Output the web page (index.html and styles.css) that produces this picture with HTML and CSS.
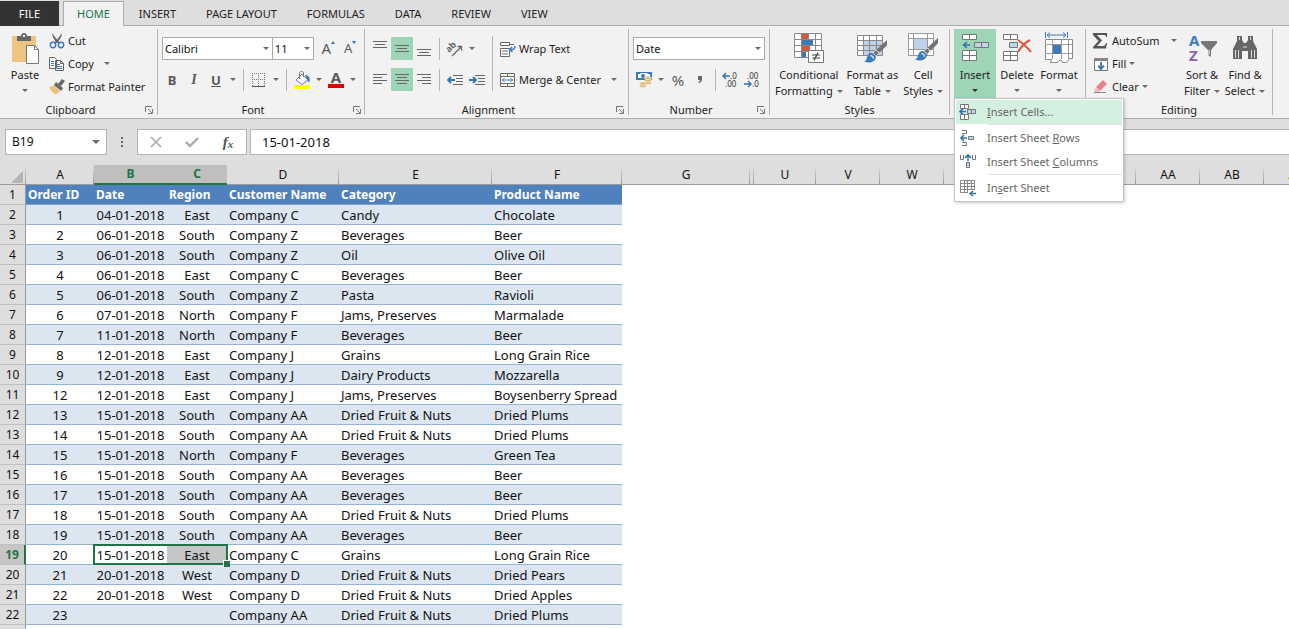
FILE: index.html
```
<!DOCTYPE html>
<html lang="en">
<head>
<meta charset="utf-8">
<title>Orders - Spreadsheet</title>
<link rel="stylesheet" href="styles.css">
</head>
<body>
<svg class="defs" aria-hidden="true">
  <symbol id="brush" viewBox="0 0 22 22"><path d="M22 0v5l-7 7-3-3z" fill="#737373"/><path d="M11.500 9.500l3 3-3 3-3-3z" fill="#737373" stroke="#f2f2f2" stroke-width=".6"/><path d="M8 12.500l3.500 3.500C11 21 5 23 0 20.500c3-1 2-3 3.500-5.500s3-2.500 4.500-2.500z" fill="#3c7ab8"/><path d="M6 15c2 0 3 1 3 3" fill="none" stroke="#dce8f4" stroke-width="1.200"/></symbol>
  <symbol id="launch" viewBox="0 0 9 9"><path d="M.5 6V.5H7M3 3l4 4M7.500 3v4.500H3" fill="none" stroke="#777"/></symbol>
</svg>
<nav class="tabs" aria-label="Ribbon tabs">
  <button class="tab tab-file">FILE</button>
  <button class="tab tab-active">HOME</button>
  <button class="tab">INSERT</button>
  <button class="tab">PAGE LAYOUT</button>
  <button class="tab">FORMULAS</button>
  <button class="tab">DATA</button>
  <button class="tab">REVIEW</button>
  <button class="tab">VIEW</button>
</nav>

<div class="ribbon">
  <section class="group g-clipboard">
    <div class="body">
      <button class="big">
        <svg width="30" height="32" viewBox="0 0 30 32"><path d="M2 4h24v26H2z" fill="#ecc582"/><path d="M7 4h4c0-4 6-4 6 0h4v5H7z" fill="#666"/><path d="M13 3h2v2h-2z" fill="#f2f2f2"/><path d="M16.500 13.500h8l4 4v14h-12z" fill="#fff" stroke="#777"/><path d="M24.500 13.500v4h4" fill="none" stroke="#777"/></svg>
        <span>Paste</span><i class="caret"></i>
      </button>
      <div class="stack">
        <button class="line"><svg width="16" height="16" viewBox="0 0 16 16"><path d="M3 0l6 8 2 2-1 1-3-2C5 6 3 3 3 0zM13 0c0 3-2 6-4 9l-3 2-1-1 2-2z" fill="#666"/><circle cx="4" cy="12" r="2.700" fill="none" stroke="#3f7abf" stroke-width="1.400"/><circle cx="12" cy="12" r="2.700" fill="none" stroke="#3f7abf" stroke-width="1.400"/></svg>Cut</button>
        <button class="line"><svg width="16" height="16" viewBox="0 0 16 16"><path d="M.5 1.500h5l2 2v9h-7zM6.500 4.500h5l3 3v7h-8z" fill="#fff" stroke="#666"/><path d="M11.500 4.500v3h3" fill="none" stroke="#666"/><path d="M2 5.500h3M2 7.500h3M2 9.500h3M8 8.500h3M8 10.500h5M8 12.500h5" stroke="#3f7abf"/></svg>Copy<i class="caret caret-far"></i></button>
        <button class="line"><svg width="16" height="16" viewBox="0 0 16 16"><path d="M5 6l6 6-4 3.500c-3-1-5-4-7-7z" fill="#ecc07a"/><path d="M7 3l7 6-2 3-7-6z" fill="#666"/><path d="M9 5l4-5 3 2-4 5z" fill="#666"/></svg>Format Painter</button>
      </div>
    </div>
    <footer class="with-launch"><h2>Clipboard</h2><button class="launch" aria-label="Clipboard settings"><svg width="9" height="9"><use href="#launch"/></svg></button></footer>
  </section>

  <section class="group g-font">
    <div class="body rows">
      <div class="row">
        <label class="combo font-name"><select aria-label="Font"><option>Calibri</option></select><i class="caret"></i></label>
        <label class="combo font-size"><select aria-label="Font size"><option>11</option></select><i class="caret"></i></label>
        <button class="tool grow" aria-label="Increase font size"><span class="grow-a">A</span><i class="tri-up"></i></button>
        <button class="tool grow" aria-label="Decrease font size"><span>A</span><i class="tri-down"></i></button>
      </div>
      <div class="row">
        <button class="tool bold">B</button><button class="tool italic">I</button><button class="tool under">U</button>
        <button class="drop" aria-label="Underline styles"><i class="caret"></i></button><span class="sep"></span>
        <button class="tool" aria-label="Borders"><svg width="14" height="14" viewBox="0 0 14 14"><path d="M.5 0v13M6.500 0v13M12.500 0v13M0 .5h14M0 6.500h14" stroke="#777" stroke-dasharray="1 1"/><path d="M0 13.500h13" stroke="#555"/></svg></button>
        <button class="drop" aria-label="Border styles"><i class="caret"></i></button><span class="sep"></span>
        <button class="tool" aria-label="Fill colour"><svg width="18" height="18" viewBox="0 0 18 18"><path d="M3 9l6-6 6 6-6 4.500z" fill="#fff" stroke="#777"/><path d="M6.500 8V2c0-2 4-2 4 0v4" fill="none" stroke="#777"/><path d="M12 4c4 0 6 3 4 8-1-2-1-3-2-4z" fill="#3c7ab8"/><path d="M1 14h16v4H1z" fill="#ff0"/></svg></button>
        <button class="drop" aria-label="Fill colours"><i class="caret"></i></button>
        <button class="tool color-a" aria-label="Font colour">A</button>
        <button class="drop" aria-label="Font colours"><i class="caret"></i></button>
      </div>
    </div>
    <footer class="with-launch"><h2>Font</h2><button class="launch" aria-label="Font settings"><svg width="9" height="9"><use href="#launch"/></svg></button></footer>
  </section>

  <section class="group g-align">
    <div class="body">
      <div class="rows">
        <div class="row">
          <button class="tool" aria-label="Top align"><svg width="14" height="16" viewBox="0 0 14 16"><path d="M0 .5h14M2 3.500h10M0 6.500h14" stroke="#666"/></svg></button>
          <button class="tool on" aria-label="Middle align"><svg width="14" height="16" viewBox="0 0 14 16"><path d="M0 4.500h14M2 7.500h10M0 10.500h14" stroke="#666"/></svg></button>
          <button class="tool" aria-label="Bottom align"><svg width="14" height="16" viewBox="0 0 14 16"><path d="M0 8.500h14M2 11.500h10M0 14.500h14" stroke="#666"/></svg></button><span class="sep"></span>
          <button class="tool" aria-label="Orientation"><svg width="20" height="20" viewBox="0 0 20 20"><text x="4" y="14" transform="rotate(-45 4 14)" class="ab">ab</text><path d="M7 17L16 8M12.500 7.500h4v4" fill="none" stroke="#666" stroke-width="1.300"/></svg></button>
          <button class="drop" aria-label="Orientation options"><i class="caret"></i></button>
        </div>
        <div class="row">
          <button class="tool" aria-label="Align left"><svg width="14" height="12" viewBox="0 0 14 12"><path d="M0 .5h14M0 3.500h9M0 6.500h14M0 9.500h9" stroke="#666"/></svg></button>
          <button class="tool on" aria-label="Centre"><svg width="14" height="12" viewBox="0 0 14 12"><path d="M0 .5h14M2 3.500h10M0 6.500h14M2 9.500h10" stroke="#666"/></svg></button>
          <button class="tool" aria-label="Align right"><svg width="14" height="12" viewBox="0 0 14 12"><path d="M0 .5h14M5 3.500h9M0 6.500h14M5 9.500h9" stroke="#666"/></svg></button><span class="sep"></span>
          <button class="tool" aria-label="Decrease indent"><svg width="16" height="12" viewBox="0 0 16 12"><path d="M6 1.500h10M9 4.500h7M9 7.500h7M6 10.500h10" stroke="#666"/><path d="M8 6H1M4 3L1 6l3 3" fill="none" stroke="#3572ae" stroke-width="1.800"/></svg></button>
          <button class="tool" aria-label="Increase indent"><svg width="16" height="12" viewBox="0 0 16 12"><path d="M6 1.500h10M9 4.500h7M9 7.500h7M6 10.500h10" stroke="#666"/><path d="M0 6h7M4 3l3 3-3 3" fill="none" stroke="#3572ae" stroke-width="1.800"/></svg></button>
        </div>
      </div>
      <span class="sep sep-tall"></span>
      <div class="rows wrap-rows">
        <button class="line"><svg width="16" height="16" viewBox="0 0 16 16"><path d="M.5 1.500h9v3h-9zM.5 7.500h9v8h-9z" fill="#fff" stroke="#666"/><path d="M2 10h6M2 13h6M10 3.500h4" stroke="#666"/><path d="M15 5c0 3-2 4-5 4M12 6L9.500 9l3 2" fill="none" stroke="#3f7abf" stroke-width="1.400"/></svg>Wrap Text</button>
        <button class="line"><svg width="16" height="16" viewBox="0 0 16 16"><path d="M.5 1.500h14v13H.5zM.5 4.500h14M.5 11.500h14M7.500 1.500v3M7.500 11.500v3" fill="#fff" stroke="#666"/><path d="M2 8h11M4.500 6L2.500 8l2 2M10.500 6l2 2-2 2" fill="none" stroke="#3f7abf"/></svg>Merge &amp; Center<i class="caret caret-far"></i></button>
      </div>
    </div>
    <footer class="with-launch"><h2>Alignment</h2><button class="launch" aria-label="Alignment settings"><svg width="9" height="9"><use href="#launch"/></svg></button></footer>
  </section>

  <section class="group g-number">
    <div class="body rows">
      <div class="row"><label class="combo number-format"><select aria-label="Number format"><option>Date</option></select><i class="caret"></i></label></div>
      <div class="row">
        <button class="tool" aria-label="Accounting format"><svg width="16" height="17" viewBox="0 0 16 17"><path d="M0 1h16v8H0z" fill="#3c7ab8"/><path d="M2 3h2l1-1h6l1 1h2v4H2z" fill="#fff"/><circle cx="7" cy="5" r="2" fill="#3c7ab8"/><g fill="#e6b869" stroke="#f2f2f2" stroke-width=".6"><ellipse cx="12" cy="12" rx="3.500" ry="1.600"/><ellipse cx="12" cy="9.500" rx="3.500" ry="1.600"/><ellipse cx="12" cy="7" rx="3.500" ry="1.600"/><ellipse cx="7" cy="15" rx="3.500" ry="1.600"/><ellipse cx="7" cy="12.500" rx="3.500" ry="1.600"/></g></svg></button>
        <button class="drop" aria-label="Currencies"><i class="caret"></i></button>
        <button class="tool percent">%</button><button class="tool comma" aria-label="Comma style"><svg width="6" height="9" viewBox="0 0 6 9"><path d="M1 1h4v3c0 2-1 4-4 4 1-1 2-2 2-3H1z" fill="#666"/></svg></button><span class="sep"></span>
        <button class="tool dec" aria-label="Increase decimal"><svg width="20" height="18" viewBox="0 0 20 18"><path d="M9 5H2M5 2L2 5l3 3" fill="none" stroke="#3572ae" stroke-width="1.400"/><text x="9" y="8">.0</text><text x="4" y="16">.00</text></svg></button>
        <button class="tool dec" aria-label="Decrease decimal"><svg width="20" height="18" viewBox="0 0 20 18"><text x="4" y="8">.00</text><path d="M1 13h7M5 10l3 3-3 3" fill="none" stroke="#3572ae" stroke-width="1.400"/><text x="9" y="16">.0</text></svg></button>
      </div>
    </div>
    <footer class="with-launch"><h2>Number</h2><button class="launch" aria-label="Number settings"><svg width="9" height="9"><use href="#launch"/></svg></button></footer>
  </section>

  <section class="group g-styles">
    <div class="body">
      <button class="big w-cond"><svg width="30" height="32" viewBox="0 0 30 32"><path d="M.5 1.500h27v24H.5z" fill="#fff"/><path d="M8 2h6v5H8zM8 14h8v5H8z" fill="#d2593b"/><path d="M8 8h11v5H8zM8 20h4v5H8z" fill="#3c7ab8"/><path d="M.5 1.500h27v24H.5zM.5 7.500h27M.5 13.500h27M.5 19.500h27M7.500 1v24M14.500 1v6M21.500 1v24" fill="none" stroke="#888"/><path d="M14.500 18.500h15v12h-15z" fill="#fff" stroke="#777"/><path d="M18 23h8M18 26h8M24 20.500l-4 8" stroke="#444" stroke-width="1.200"/></svg><span>Conditional<br>Formatting<i class="caret"></i></span></button>
      <button class="big w-table"><svg width="30" height="32" viewBox="0 0 30 32"><path d="M.5 3.500h25v20H.5z" fill="#fff"/><path d="M7 9h18v14H7z" fill="#bdd2e8"/><path d="M.5 3.500h25v20H.5zM0 8.500h25M0 13.500h25M0 18.500h25M6.500 3v20M12.500 3v20M19.500 3v20" fill="none" stroke="#888"/><use href="#brush" x="7" y="8" width="23" height="23"/></svg><span>Format as<br>Table<i class="caret"></i></span></button>
      <button class="big w-cell"><svg width="30" height="32" viewBox="0 0 30 32"><path d="M.5 1.500h25v22H.5z" fill="#fff"/><path d="M6 7h14v10H6z" fill="#bdd2e8"/><path d="M.5 1.500h25v22H.5zM0 6.500h25M0 17.500h25M5.500 1v22M19.500 1v22" fill="none" stroke="#999"/><use href="#brush" x="7" y="6" width="23" height="23"/></svg><span>Cell<br>Styles<i class="caret"></i></span></button>
    </div>
    <footer><h2>Styles</h2></footer>
  </section>

  <section class="group g-cells" aria-label="Cells">
    <div class="body">
      <div class="menu-anchor">
        <button class="big big-on" aria-expanded="true"><svg width="32" height="32" viewBox="0 0 32 32"><path d="M3.500 2.500h14v5h-14zM10.500 2.500v5M3.500 18.500h14v10h-14zM10.500 18.500v10M3.500 23.500h14" fill="#fff" stroke="#777"/><path d="M15.500 10.500h14v5h-14zM22.500 10.500v5" fill="#c3d3e6" stroke="#777"/><path d="M11 13H5M8 10l-3.500 3L8 16" fill="none" stroke="#3572ae" stroke-width="1.600"/></svg><span>Insert</span><i class="caret caret-dark"></i></button>
        <div class="menu" role="menu">
          <button class="item item-on" role="menuitem"><svg width="18" height="18" viewBox="0 0 18 18"><path d="M1.500 1.500h8v4h-8zM5.500 1.500v4M1.500 11.500h8v5h-8zM5.500 11.500v5" fill="#fff" stroke="#777"/><path d="M8.500 6.500h8v4h-8zM12.500 6.500v4" fill="#c3d3e6" stroke="#777"/><path d="M7 8.500H1M4 5.500l-3 3 3 3" fill="none" stroke="#3572ae" stroke-width="1.600"/></svg><span><u>I</u>nsert Cells...</span></button>
          <hr>
          <button class="item" role="menuitem"><svg width="18" height="18" viewBox="0 0 18 18"><path d="M3 1.500h4.500v3H3M3 16.500h4.500v-3H3" fill="none" stroke="#777"/><path d="M9.500 7.500h5v3h-5z" fill="#c3d3e6" stroke="#777"/><path d="M8 9H2M5 6L2 9l3 3" fill="none" stroke="#3572ae" stroke-width="1.600"/></svg><span>Insert Sheet <u>R</u>ows</span></button>
          <button class="item" role="menuitem"><svg width="18" height="18" viewBox="0 0 18 18"><path d="M1.500 2v4.500h3V2M13.500 2v4.500h3V2" fill="none" stroke="#777"/><path d="M7.500 9.500h3v5h-3z" fill="#c3d3e6" stroke="#777"/><path d="M9 8V2M6 5l3-3 3 3" fill="none" stroke="#3572ae" stroke-width="1.600"/></svg><span>Insert Sheet <u>C</u>olumns</span></button>
          <hr>
          <button class="item" role="menuitem"><svg width="18" height="18" viewBox="0 0 18 18"><path d="M1.500 1.500h14v12h-14zM1.500 4.500h14M1.500 7.500h14M1.500 10.500h14M5.500 1v12M8.500 1v12M12.500 1v12" fill="#fff" stroke="#888"/><path d="M9 11h8v6H9z" fill="#fff"/><path d="M17 14.500h-6M14 12l-3 2.500 3 2.500" fill="none" stroke="#3572ae" stroke-width="1.400"/></svg><span>In<u>s</u>ert Sheet</span></button>
        </div>
      </div>
      <button class="big"><svg width="32" height="32" viewBox="0 0 32 32"><path d="M2.500 2.500h14v5h-14zM9.500 2.500v5M2.500 19.500h14v9h-14zM9.500 19.500v9M2.500 23.500h14" fill="#fff" stroke="#777"/><path d="M8.500 10.500h8v5h-8z" fill="#c3d3e6" stroke="#777"/><path d="M17 8c4 3 9 7 13 12M29 8c-4 2-9 7-12 12" fill="none" stroke="#d9573a" stroke-width="2"/></svg><span>Delete</span><i class="caret"></i></button>
      <button class="big"><svg width="32" height="32" viewBox="0 0 32 32"><path d="M2.500 0v6M24.500 0v6M4 3h19M7 .5L4 3l3 2.500M20 .5L23 3l-3 2.500" fill="none" stroke="#3c7ab8"/><path d="M2.500 7.500h27v19h-3l-3 4h-4l-2-3-3 3h-7l1-3H2.500z" fill="#fff" stroke="#888"/><path d="M9.500 7v20M18.500 7v20M25.500 7v20M2 12.500h27M2 21.500h27" stroke="#999"/><path d="M10 13h8v9h-8z" fill="#3c7ab8"/></svg><span>Format</span><i class="caret"></i></button>
    </div>
  </section>

  <section class="group g-edit">
    <div class="body">
      <div class="stack">
        <button class="line"><svg width="16" height="16" viewBox="0 0 16 16"><path d="M0 0h14v4h-1c0-2-1-2-3-2H4l5 5.500L4 13h6c2 0 2-1 3-3h1l-1 5.500H0V14l5.500-6L0 2z" fill="#555"/></svg>AutoSum<i class="caret caret-far"></i></button>
        <button class="line"><svg width="16" height="16" viewBox="0 0 16 16"><path d="M1.500 2.500h13v12h-13z" fill="#fff" stroke="#777"/><path d="M1 2h14v3H1z" fill="#888"/><path d="M8 6v7M5 9.500L8 13l3-3.500" fill="none" stroke="#3572ae" stroke-width="1.800"/></svg>Fill<i class="caret"></i></button>
        <button class="line"><svg width="16" height="16" viewBox="0 0 16 16"><path d="M10 1l4 4-7 7-4-4z" fill="#e8828f"/><path d="M3 8l4 4-2 1.500H3L1 11.500z" fill="#f4b8bf"/><path d="M1 13.500h12" stroke="#888"/></svg>Clear<i class="caret"></i></button>
      </div>
      <button class="big"><svg width="32" height="32" viewBox="0 0 32 32"><text x="3" y="14" class="az-a">A</text><text x="3" y="29" class="az-z">Z</text><path d="M15 9h16v2l-6 7v7l-3-2v-5l-7-7z" fill="#777"/><path d="M23 18v5" stroke="#fff"/></svg><span>Sort &amp;<br>Filter<i class="caret"></i></span></button>
      <button class="big w-cell"><svg width="30" height="32" viewBox="0 0 30 32"><path d="M7 4h5v4l2 3h2l2-3V4h5v5l4 8v10h-9v-8h-6v8H3V17l4-8z" fill="#666"/><path d="M5.500 18v8M8.500 18v8M21.500 18v8M24.500 18v8M9.500 5v3M20.500 5v3M13 15h4" stroke="#ddd"/></svg><span>Find &amp;<br>Select<i class="caret"></i></span></button>
    </div>
    <footer><h2>Editing</h2></footer>
  </section>
</div>

<div class="formula-bar">
  <label class="name-box"><input aria-label="Name box" value="B19"><i class="caret caret-name"></i></label>
  <span class="dots"><i></i><i></i><i></i></span>
  <div class="fx-box">
    <button aria-label="Cancel"><svg width="12" height="12" viewBox="0 0 12 12"><path d="M1 1l10 10M11 1L1 11" stroke="#aaa" stroke-width="1.600"/></svg></button>
    <button aria-label="Enter"><svg width="14" height="12" viewBox="0 0 14 12"><path d="M1 6l4 4 8-8" fill="none" stroke="#aaa" stroke-width="2.400"/></svg></button>
    <button class="fx" aria-label="Insert function">f<small>x</small></button>
  </div>
  <input class="formula" aria-label="Formula" value="15-01-2018">
</div>

<main class="sheet">
<table>
<colgroup><col class="c-head"><col class="c-a"><col class="c-b"><col class="c-c"><col class="c-d"><col class="c-e"><col class="c-f"><col class="c-g"><col class="c-t"><col class="c-u"><col class="c-std"><col class="c-std"><col class="c-std"><col class="c-std"><col class="c-std"><col class="c-std"><col class="c-std"><col class="c-std"></colgroup>
<thead><tr><th class="corner"><svg width="12" height="12" viewBox="0 0 12 12"><path d="M12 0v12H0z" fill="#b4b4b4"/></svg></th><th>A</th><th class="sel">B</th><th class="sel">C</th><th>D</th><th>E</th><th>F</th><th>G</th><th></th><th>U</th><th>V</th><th>W</th><th>X</th><th>Y</th><th>Z</th><th>AA</th><th>AB</th><th>AC</th></tr></thead>
<tbody>
<tr class="titles"><th>1</th><td>Order ID</td><td>Date</td><td>Region</td><td>Customer Name</td><td>Category</td><td>Product Name</td></tr>
<tr><th>2</th><td>1</td><td>04-01-2018</td><td>East</td><td>Company C</td><td>Candy</td><td>Chocolate</td></tr>
<tr><th>3</th><td>2</td><td>06-01-2018</td><td>South</td><td>Company Z</td><td>Beverages</td><td>Beer</td></tr>
<tr><th>4</th><td>3</td><td>06-01-2018</td><td>South</td><td>Company Z</td><td>Oil</td><td>Olive Oil</td></tr>
<tr><th>5</th><td>4</td><td>06-01-2018</td><td>East</td><td>Company C</td><td>Beverages</td><td>Beer</td></tr>
<tr><th>6</th><td>5</td><td>06-01-2018</td><td>South</td><td>Company Z</td><td>Pasta</td><td>Ravioli</td></tr>
<tr><th>7</th><td>6</td><td>07-01-2018</td><td>North</td><td>Company F</td><td>Jams, Preserves</td><td>Marmalade</td></tr>
<tr><th>8</th><td>7</td><td>11-01-2018</td><td>North</td><td>Company F</td><td>Beverages</td><td>Beer</td></tr>
<tr><th>9</th><td>8</td><td>12-01-2018</td><td>East</td><td>Company J</td><td>Grains</td><td>Long Grain Rice</td></tr>
<tr><th>10</th><td>9</td><td>12-01-2018</td><td>East</td><td>Company J</td><td>Dairy Products</td><td>Mozzarella</td></tr>
<tr><th>11</th><td>12</td><td>12-01-2018</td><td>East</td><td>Company J</td><td>Jams, Preserves</td><td>Boysenberry Spread</td></tr>
<tr><th>12</th><td>13</td><td>15-01-2018</td><td>South</td><td>Company AA</td><td>Dried Fruit &amp; Nuts</td><td>Dried Plums</td></tr>
<tr><th>13</th><td>14</td><td>15-01-2018</td><td>South</td><td>Company AA</td><td>Dried Fruit &amp; Nuts</td><td>Dried Plums</td></tr>
<tr><th>14</th><td>15</td><td>15-01-2018</td><td>North</td><td>Company F</td><td>Beverages</td><td>Green Tea</td></tr>
<tr><th>15</th><td>16</td><td>15-01-2018</td><td>South</td><td>Company AA</td><td>Beverages</td><td>Beer</td></tr>
<tr><th>16</th><td>17</td><td>15-01-2018</td><td>South</td><td>Company AA</td><td>Beverages</td><td>Beer</td></tr>
<tr><th>17</th><td>18</td><td>15-01-2018</td><td>South</td><td>Company AA</td><td>Dried Fruit &amp; Nuts</td><td>Dried Plums</td></tr>
<tr><th>18</th><td>19</td><td>15-01-2018</td><td>South</td><td>Company AA</td><td>Beverages</td><td>Beer</td></tr>
<tr><th class="sel">19</th><td>20</td><td class="pick pick-first">15-01-2018</td><td class="pick pick-last">East</td><td>Company C</td><td>Grains</td><td>Long Grain Rice</td></tr>
<tr><th>20</th><td>21</td><td>20-01-2018</td><td>West</td><td>Company D</td><td>Dried Fruit &amp; Nuts</td><td>Dried Pears</td></tr>
<tr><th>21</th><td>22</td><td>20-01-2018</td><td>West</td><td>Company D</td><td>Dried Fruit &amp; Nuts</td><td>Dried Apples</td></tr>
<tr><th>22</th><td>23</td><td></td><td></td><td>Company AA</td><td>Dried Fruit &amp; Nuts</td><td>Dried Plums</td></tr>
<tr><th></th><td></td><td></td><td></td><td></td><td></td><td></td></tr>
</tbody>
</table>
</main>
</body>
</html>
```
FILE: styles.css
```
* { box-sizing: border-box; }
html, body { height: 100%; }
body {
  margin: 0;
  display: flex;
  flex-direction: column;
  overflow: hidden;
  background: #fff;
  color: #222;
  font: 11px/16px "Noto Sans", "Open Sans", sans-serif;
}
button, input, select {
  font: inherit;
  color: inherit;
  background: none;
  border: 0;
  padding: 0;
  margin: 0;
  border-radius: 0;
  appearance: none;
}
svg { display: block; flex: none; }
.defs { position: absolute; width: 0; height: 0; }

.caret {
  display: inline-block;
  flex: none;
  border: 3px solid transparent;
  border-top-color: #6a6a6a;
  border-bottom: 0;
}
.caret-dark { border-top-color: #333; }

/* Tabs */
.tabs {
  flex: none;
  display: flex;
  height: 26px;
  padding-top: 1px;
  background: #dedede;
  box-shadow: inset 0 -1px #ababab;
}
.tab { padding: 0 15px; }
.tab-file { width: 59px; margin-right: 4px; background: #333; color: #fff; }
.tab-active {
  padding: 0 13px;
  background: #f2f2f2;
  border: 1px solid #ababab;
  border-bottom: 0;
  color: #217346;
}

/* Ribbon */
.ribbon {
  flex: none;
  display: flex;
  height: 93px;
  background: #f2f2f2;
  border-bottom: 1px solid #ababab;
}
.group {
  flex: none;
  display: flex;
  flex-direction: column;
  margin: 3px 0;
  padding: 0 4px;
  border-right: 1px solid #b5b5b5;
}
.g-clipboard { width: 158px; }
.g-font { width: 207px; padding: 0 3px; }
.g-align { width: 264px; }
.g-number { width: 141px; }
.g-styles { width: 180px; }
.g-cells { width: 136px; }
.g-edit { width: 187px; }
.body { flex: 1; display: flex; min-height: 0; }
footer { position: relative; flex: none; height: 10px; line-height: 10px; text-align: center; }
.with-launch { padding-right: 16px; }
h2 { margin: 0; font: inherit; }
.launch { position: absolute; right: -1px; bottom: 0; }

.big {
  display: flex;
  flex-direction: column;
  align-items: center;
  width: 42px;
  height: 69px;
  padding-top: 3px;
  white-space: nowrap;
}
.big > span { margin-top: 3px; }
.big > .caret { margin-top: 6px; }
.big span .caret { margin: 0 0 2px 4px; }
.big-on { background: #9fd5b7; }
.w-cond { width: 70px; }
.w-table { width: 58px; }
.w-cell { width: 44px; }
.stack { display: flex; flex-direction: column; }
.line {
  display: flex;
  align-items: center;
  gap: 3px;
  height: 23px;
  white-space: nowrap;
}
.line .caret-far { margin-left: 7px; }
.g-edit .line { width: 91px; padding-left: 3px; }
.g-edit .line .caret-far { margin-left: auto; margin-right: 4px; }
.g-clipboard .stack { margin-left: 3px; }

.rows { display: flex; flex-direction: column; gap: 8px; padding-top: 8px; }
.row { display: flex; height: 23px; align-items: center; }
.tool {
  display: flex;
  align-items: center;
  justify-content: center;
  width: 22px;
  height: 23px;
  color: #595959;
}
.on { background: #9fd5b7; }
.drop { display: flex; align-items: center; justify-content: center; width: 12px; height: 23px; }
.sep { width: 1px; height: 22px; margin: 0 4px; background: #b5b5b5; }
.bold, .italic, .under { font-size: 13px; font-weight: 700; }
.italic { font-family: "Liberation Serif", serif; font-style: italic; font-size: 14px; }
.under { text-decoration: underline; }
.grow { align-items: flex-start; font-size: 13px; line-height: 23px; }
.grow-a { font-size: 15px; }
.tri-up, .tri-down { margin-top: 4px; border: 2px solid transparent; }
.tri-up { border-bottom: 3px solid #3572ae; border-top: 0; }
.tri-down { border-top: 3px solid #3572ae; border-bottom: 0; }
.color-a {
  font-size: 15px;
  font-weight: 700;
  line-height: 15px;
  background: linear-gradient(#e00000, #e00000) 3px 16px / 16px 4px no-repeat;
  padding-bottom: 5px;
}
.percent { font-size: 15px; }
.ab { font: 700 9px "Noto Sans", sans-serif; fill: #666; }
.dec text { font: 8px "Noto Sans", sans-serif; fill: #333; }
.az-a, .az-z { font: 700 15px "Noto Sans", sans-serif; fill: #3f7abf; }
.az-z { fill: #8f5fb5; }

.combo {
  display: flex;
  align-items: center;
  height: 23px;
  background: #fff;
  border: 1px solid #ababab;
  padding: 0 3px 0 2px;
  color: #111;
}
.combo select { flex: 1; min-width: 0; }
.font-name { width: 112px; margin-left: 1px; }
.font-size { width: 43px; margin-left: -1px; margin-right: 3px; }
.number-format { width: 132px; }
.sep-tall { height: 55px; margin: 7px 7px 0 4px; }
.wrap-rows { width: 128px; }

/* Drop-down menu */
.menu-anchor { position: relative; }
.menu {
  position: absolute;
  z-index: 5;
  top: 69px;
  left: 0;
  width: 170px;
  padding: 1px;
  background: #fff;
  border: 1px solid #c6c6c6;
  box-shadow: 1px 1px 3px #0003;
  color: #666;
}
.menu hr { margin: 0 0 1px 32px; border: 0; border-top: 1px solid #e1e1e1; }
.item {
  display: flex;
  align-items: center;
  gap: 10px;
  width: 100%;
  height: 24px;
  padding-left: 3px;
  text-align: left;
}
.item-on { background: #d3f0e0; }

/* Formula bar */
.formula-bar {
  flex: none;
  display: flex;
  height: 46px;
  padding: 10px 0 10px 5px;
  background: #dedede;
  color: #111;
}
.name-box, .fx-box, .formula { background: #fff; border: 1px solid #b4b4b4; }
.name-box { display: flex; align-items: center; width: 102px; padding: 0 6px; font-size: 12px; }
.name-box input { flex: 1; min-width: 0; }
.caret-name { border-width: 4px 4px 0; }
.dots { display: flex; flex-direction: column; justify-content: center; gap: 2px; margin: 0 14px; }
.dots i { width: 2px; height: 2px; background: #666; }
.fx-box { display: flex; width: 110px; margin-right: 3px; }
.fx-box button { flex: 1; display: flex; align-items: center; justify-content: center; }
.fx-box .fx { font: italic 700 15px "Liberation Serif", serif; color: #555; }
.fx small { font-size: 11px; padding-top: 4px; }
.formula { flex: 1; min-width: 0; padding-left: 11px; border-right: 0; font-size: 13px; }

/* Sheet */
.sheet { flex: 1; min-height: 0; overflow: hidden; }
table { table-layout: fixed; width: 0; border-collapse: separate; border-spacing: 0; color: #111; }
.c-head { width: 26px; }
.c-a { width: 68px; }
.c-b { width: 73px; }
.c-c { width: 60px; }
.c-d { width: 112px; }
.c-e { width: 153px; }
.c-f { width: 130px; }
.c-g { width: 128px; }
.c-t { width: 4px; }
.c-u { width: 62px; }
.c-std { width: 64px; }
th, td { height: 20px; padding: 0 2px; line-height: 18px; white-space: nowrap; overflow: visible; }
thead th {
  padding: 0;
  font-size: 12px;
  font-weight: 400;
  background: linear-gradient(#dedede, #999) right / 1px 100% no-repeat #dedede;
  border-bottom: 1px solid #9b9b9b;
}
thead .corner svg { margin: 4px 3px 0 auto; }
thead .sel { background: #bfbfbf; border-bottom: 2px solid #217346; color: #217346; font-weight: 700; }
tbody th {
  font-size: 12px;
  font-weight: 400;
  background: #dedede;
  border-right: 1px solid #9b9b9b;
  border-bottom: 1px solid #c0c0c0;
}
tbody th.sel { background: #c6c6c6; border-right: 2px solid #217346; color: #217346; font-weight: 700; }
td { font-size: 13px; text-align: left; border-bottom: 1px solid #95b3d7; }
td:nth-child(-n+4) { text-align: center; }
tbody tr:nth-child(even) td { background: #dce6f1; }
tbody .titles td { background: #4f81bd; color: #fff; font-size: 12px; font-weight: 700; text-align: left; border-bottom-color: #7ba0cd; }
td.pick { position: relative; }
td.pick-last { background: #c6c6c6; }
.pick::before { content: ""; position: absolute; inset: -1px 0; border: solid #217346; border-width: 2px 0; }
.pick-first::before { left: -1px; border-left-width: 2px; }
.pick-last::before { right: -1px; border-right-width: 2px; }
.pick-last::after {
  content: "";
  position: absolute;
  right: -3px;
  bottom: -3px;
  width: 6px;
  height: 6px;
  background: #217346;
  border: solid #fff;
  border-width: 1px 0 0 1px;
}
```
